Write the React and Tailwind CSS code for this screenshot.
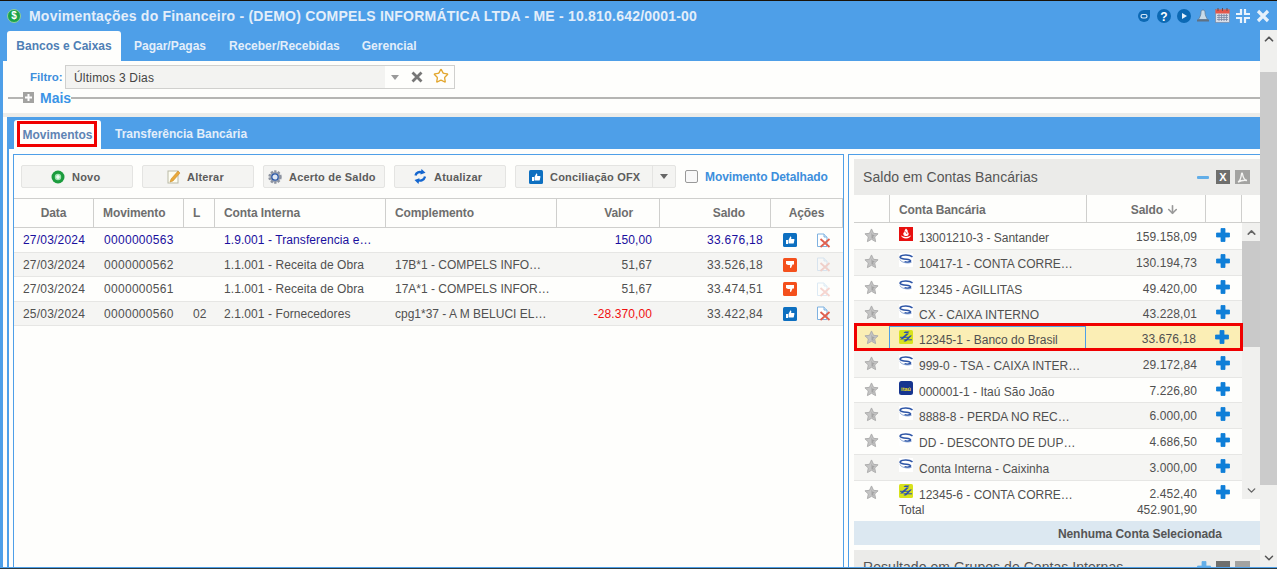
import React from "react";
import { ChevronUp, ChevronDown, Star, ArrowDown } from "lucide-react";

const movimentos = [
  { data: "27/03/2024", mov: "0000000563", l: "", conta: "1.9.001 - Transferencia e…", comp: "", valor: "150,00", saldo: "33.676,18", up: true, on: true, blue: true },
  { data: "27/03/2024", mov: "0000000562", l: "", conta: "1.1.001 - Receita de Obra", comp: "17B*1 - COMPELS INFO…", valor: "51,67", saldo: "33.526,18", up: false, on: false },
  { data: "27/03/2024", mov: "0000000561", l: "", conta: "1.1.001 - Receita de Obra", comp: "17A*1 - COMPELS INFOR…", valor: "51,67", saldo: "33.474,51", up: false, on: false },
  { data: "25/03/2024", mov: "0000000560", l: "02", conta: "2.1.001 - Fornecedores", comp: "cpg1*37 - A M BELUCI EL…", valor: "-28.370,00", saldo: "33.422,84", up: true, on: true, red: true },
];

const contas = [
  { h: "h-[27px] pt-px", bank: "san", nome: "13001210-3 - Santander", saldo: "159.158,09" },
  { h: "h-[26px]", bank: "s", nome: "10417-1 - CONTA CORRE…", saldo: "130.194,73" },
  { h: "h-[25px]", bank: "s", nome: "12345 - AGILLITAS", saldo: "49.420,00" },
  { h: "h-[25px]", bank: "s", nome: "CX - CAIXA INTERNO", saldo: "43.228,01" },
  { h: "h-[25px]", bank: "bb", nome: "12345-1 - Banco do Brasil", saldo: "33.676,18", sel: true },
  { h: "h-[27px] pt-px", bank: "s", nome: "999-0 - TSA - CAIXA INTER…", saldo: "29.172,84" },
  { h: "h-[25px]", bank: "itau", nome: "000001-1 - Itaú São João", saldo: "7.226,80" },
  { h: "h-[26px]", bank: "s", nome: "8888-8 - PERDA NO REC…", saldo: "6.000,00" },
  { h: "h-[26px]", bank: "s", nome: "DD - DESCONTO DE DUP…", saldo: "4.686,50" },
  { h: "h-[26px]", bank: "s", nome: "Conta Interna - Caixinha", saldo: "3.000,00" },
  { h: "h-[26px]", bank: "bb", nome: "12345-6 - CONTA CORRE…", saldo: "2.452,40" },
];

function BankIcon({ bank }) {
  if (bank === "san") {
    return (
      <svg width="14" height="14" viewBox="0 0 14 14" className="shrink-0">
        <rect width="14" height="14" fill="#e8100f" />
        <path d="M7 1.500C8.500 3 9.300 4 8.500 5.300 9.500 5.500 10 6.500 9.500 7.700 9 8.700 8 9 7 9S5 8.700 4.500 7.700C4 6.500 4.500 5.500 5.500 5 5.500 3.500 6 2.500 7 1.500z" fill="#fff" />
        <path d="M6.500 4.500 8 7" stroke="#e8100f" strokeWidth=".8" />
        <path d="M2 8.300c.3 2 2.200 3.200 5 3.200s4.700-1.200 5-3.200C10.800 9.500 9 10 7 10S3.200 9.500 2 8.300z" fill="#fff" />
      </svg>
    );
  }
  if (bank === "bb") {
    return (
      <svg width="14" height="14" viewBox="0 0 14 14" className="shrink-0">
        <rect width="14" height="14" rx="1.500" fill="#d8e21c" />
        <path d="M1 9.500 7.500 3.500H10L3.500 9.500zM4.500 11.500 11 5.500h2L7 11.500zM6 1.500h4.500L9 3H4.500z" fill="#2b4fb0" />
        <path d="M1 7.300h9M4.500 9.800H13" stroke="#2b4fb0" strokeWidth="1" />
      </svg>
    );
  }
  if (bank === "itau") {
    return (
      <svg width="14" height="14" viewBox="0 0 14 14" className="shrink-0">
        <rect width="14" height="14" rx="2.500" fill="#16358f" />
        <text x="7" y="10" textAnchor="middle" fontSize="5.500" fontWeight="700" fill="#f3e01c" fontFamily="Liberation Sans">itaú</text>
      </svg>
    );
  }
  return (
    <svg width="14" height="14" viewBox="0 0 14 14" className="shrink-0">
      <rect width="14" height="14" fill="#fff" />
      <path d="M13.500 3.800C10.500 1.500 3 1.500 1.300 3.600.2 5.300 4.500 6 7.500 6.300c2.500.3 4.300.8 4 1.800-.5 1.200-3.800 1.400-6 .6" fill="none" stroke="#2d55a6" strokeWidth="1.600" />
      <path d="M1 6.500c.5 2.500 7 4.500 11.500 2.800" fill="none" stroke="#7d9bd0" strokeWidth=".9" />
    </svg>
  );
}

function GrayStar() {
  return (
    <svg width="15" height="15" viewBox="0 0 24 24" className="shrink-0">
      <path d="M12 1.500l3.200 7 7.300.8-5.400 5 1.500 7.500L12 18l-6.600 3.800 1.500-7.500-5.400-5 7.300-.8z" fill="#c4c4c4" stroke="#acacac" strokeWidth="1.500" />
      <path d="M12 7l1.700 3.800 3.800.4-2.800 2.600.8 3.900L12 15.800" fill="#a4a4a4" />
    </svg>
  );
}

function PlusIcon({ light }) {
  const c = light ? "#62aee8" : "#0f7fd8";
  return (
    <svg width="14" height="14" viewBox="0 0 14 14" className="shrink-0">
      <path d="M5 .5h4v4.500h4.500v4H9v4.500H5V9H.5V5H5z" fill={c} stroke={c} strokeWidth=".8" strokeLinejoin="round" />
    </svg>
  );
}

function ThumbIcon({ up, size = 14 }) {
  return (
    <svg width={size} height={size} viewBox="0 0 14 14" className="shrink-0">
      <rect width="14" height="14" rx="1.500" fill={up ? "#0d6fc0" : "#f4501c"} />
      {up ? (
        <path d="M3 7h2v4H3zM5.500 7l1.800-3.500c.8 0 1.200.6 1 1.500l-.2 1h2.700c.5 0 .7.500.6 1l-.6 3c-.1.400-.4.600-.8.600H5.500z" fill="#fff" />
      ) : (
        <path d="M3 3h8v3.500H9.500L8 10c-.8 0-1.200-.6-1-1.500l.2-1.500H5L3 6z" fill="#fff" />
      )}
    </svg>
  );
}

function DocIcon({ on }) {
  return (
    <svg width="15" height="15" viewBox="0 0 15 15" className={on ? "shrink-0" : "shrink-0 opacity-25"}>
      <path d="M1.500 1h6.500l3 3v9.500h-9.500z" fill="#fff" stroke="#7fb2e0" />
      <path d="M8 1v3h3" fill="#d6e8f8" stroke="#7fb2e0" />
      <path d="M4.500 6l9 8M13.500 6l-9 8" stroke="#e0604f" strokeWidth="1.800" />
    </svg>
  );
}

function ToolButton({ icon, label, className }) {
  return (
    <div className={`h-[23px] flex items-center bg-[#f4f4f2] border border-[#e4e4e2] rounded-[2px] text-[11px] font-bold text-[#5c5c5c] tracking-[.2px] ${className}`}>
      {icon}
      <span className="pt-px">{label}</span>
    </div>
  );
}

function HeaderCell({ children, className }) {
  return (
    <div className={`h-full flex items-center border-r border-[#cfcfcd] text-[12px] font-bold text-[#6e6e6e] tracking-[-.1px] ${className}`}>
      {children}
    </div>
  );
}

function WinIcons() {
  return (
    <div className="flex items-center gap-[6px] pr-[7px]">
      <svg width="14" height="14" viewBox="0 0 14 14"><path d="M1 7a6 6 0 0 1 6-6h6v6a6 6 0 0 1-12 0z" fill="#0c69b4" /><rect x="4" y="5.500" width="6" height="3.500" rx="1.700" fill="none" stroke="#d7e9f8" strokeWidth="1.200" /></svg>
      <svg width="14" height="14" viewBox="0 0 14 14"><circle cx="7" cy="7" r="7" fill="#0c69b4" /><text x="7" y="11.500" textAnchor="middle" fontSize="12" fontWeight="700" fill="#fff" fontFamily="Liberation Sans">?</text></svg>
      <svg width="14" height="14" viewBox="0 0 14 14"><circle cx="7" cy="7" r="7" fill="#0c69b4" /><path d="M5 4l5 3-5 3z" fill="#e6f1fb" /></svg>
      <svg width="14" height="14" viewBox="0 0 14 14" className="-ml-px"><path d="M7 1c1.500 0 2 1 2 2.500 0 3 1.500 5 2.500 7h-9c1-2 2.500-4 2.500-7C5 2 5.500 1 7 1z" fill="#c9dbe9" stroke="#63788c" strokeWidth=".7" /><rect x="1" y="10.500" width="12" height="2" fill="#5f7183" /></svg>
      <svg width="15" height="15" viewBox="0 0 15 15" className="-ml-px"><rect x=".5" y="1.500" width="14" height="13" fill="#d7dde8" stroke="#6f7f99" strokeWidth=".6" /><rect x=".5" y="1.500" width="14" height="4" fill="#e4574a" /><path d="M3 0v3M7.500 0v3M12 0v3" stroke="#6b4a4a" /><path d="M2 7.500h11M2 9.500h11M2 11.500h11M4 6v7M6.500 6v7M9 6v7M11.500 6v7" stroke="#7b88a3" strokeWidth=".8" /></svg>
      <svg width="14" height="14" viewBox="0 0 14 14" fill="none" stroke="#eaf3fc" strokeWidth="2.200"><path d="M5 0v5H0M9 0v5h5M5 14V9H0M9 14V9h5" /></svg>
      <svg width="14" height="14" viewBox="0 0 14 14" fill="none" stroke="#e6f1fb" strokeWidth="3.200"><path d="M2 2l10 10M12 2L2 12" /></svg>
    </div>
  );
}

export default function App() {
  return (
    <div className="w-[1277px] h-[569px] overflow-hidden flex flex-col bg-[#4e9fe8] font-['Liberation_Sans',Arial,sans-serif]">
      <div className="h-px shrink-0 bg-[#1a1208]" />
      {/* title bar */}
      <div className="h-[29px] shrink-0 flex items-center justify-between pl-[7px]">
        <div className="flex items-center gap-[8px]">
          <div className="w-[14px] h-[14px] rounded-full bg-[#1aa34a] border border-[#8fd09f] flex items-center justify-center text-[10px] font-bold text-white leading-none">$</div>
          <span className="pt-px text-[14px] font-bold text-[#e3eefa] tracking-[.21px]">Movimentações do Financeiro - (DEMO) COMPELS INFORMÁTICA LTDA - ME - 10.810.642/0001-00</span>
        </div>
        <WinIcons />
      </div>

      <div className="flex flex-1 min-h-0">
        <div className="w-[1260px] flex flex-col">
          {/* top tabs */}
          <div className="h-[31px] shrink-0 flex items-end pl-[7px]">
            <div className="h-[30px] w-[114px] bg-[#fefefc] rounded-t-[3px] flex items-center justify-center text-[12px] font-bold text-[#4f7fb5]">Bancos e Caixas</div>
            <div className="ml-[2px] flex text-[12px] font-bold text-[#e3eefa] h-[30px] items-center">
              <span className="px-[11px]">Pagar/Pagas</span>
              <span className="px-[11px] ml-px">Receber/Recebidas</span>
              <span className="px-[11px]">Gerencial</span>
            </div>
          </div>

          <div className="flex-1 min-h-0 ml-[3px] bg-[#fefefc] flex flex-col">
            {/* filter */}
            <div className="h-[24px] mt-[4px] shrink-0 flex items-center pl-[27px]">
              <span className="pt-px text-[11.500px] font-bold text-[#3d8fdc] w-[35px]">Filtro:</span>
              <div className="w-[390px] h-[24px] border border-[#d0d0ce] flex items-center text-[12px] text-[#444]">
                <div className="w-[319px] h-full bg-[#f3f3f1] flex items-center pl-[8px] pt-px tracking-[.2px]">Últimos 3 Dias</div>
                <div className="flex items-center flex-1">
                  <div className="ml-[6px] w-0 h-0 border-l-[4px] border-r-[4px] border-t-[5px] border-l-transparent border-r-transparent border-t-[#999]" />
                  <svg width="12" height="12" viewBox="0 0 12 12" fill="none" stroke="#777" strokeWidth="2.800" className="ml-[12px]"><path d="M1.500 1.500l9 9M10.500 1.500l-9 9" /></svg>
                  <Star size={16} strokeWidth={2} className="ml-[10px] mb-[3px] text-[#e3a72f]" />
                </div>
              </div>
            </div>

            {/* mais */}
            <div className="h-[12px] mt-[3px] shrink-0 flex items-center ml-[5px]">
              <div className="w-[15px] h-[2px] bg-[#b5b5b3]" />
              <div className="w-[11px] h-[11px] -mt-[1px] bg-[#a3a3a1] flex items-center justify-center">
                <svg width="7" height="7" viewBox="0 0 7 7" fill="none" stroke="#fff" strokeWidth="2"><path d="M3.500 0v7M0 3.500h7" /></svg>
              </div>
              <span className="ml-[6px] -mt-[1px] text-[14px] font-bold text-[#3b94e6] leading-none">Mais</span>
              <div className="flex-1 h-[2px] bg-[#b5b5b3]" />
            </div>
            <div className="h-[9px] shrink-0" />
            <div className="h-[4px] shrink-0 bg-[#ecece9]" />

            {/* section */}
            <div className="flex-1 min-h-0 ml-[4px] border-l-2 border-[#4e9fe8] flex flex-col">
              <div className="h-[32px] shrink-0 bg-[#4e9fe8] flex items-end pl-[5px] -ml-[2px] relative">
                <div className="ml-[2px] w-[87px] h-[29px] bg-[#fefefc] rounded-t-[3px] flex items-center justify-center text-[12px] font-bold text-[#5f84b4]">Movimentos</div>
                <span className="ml-[14px] mb-[6px] text-[12px] font-bold text-[#e3eefa]">Transferência Bancária</span>
                <div className="absolute left-[10px] top-[4px] w-[80px] h-[26px] border-[3px] border-[#f00000]" />
              </div>

              <div className="flex-1 min-h-0 flex pt-[5px] pl-[4px] gap-[4px]">
                {/* left panel */}
                <div className="w-[831px] border-l border-r border-t border-[#4e9fe8] flex flex-col">
                  <div className="mt-[10px] pl-[7px] flex items-center gap-[9px] shrink-0">
                    <ToolButton className="w-[112px] pl-[29px] gap-[7px]" label="Novo" icon={
                      <svg width="14" height="14" viewBox="0 0 14 14"><circle cx="7" cy="7" r="6.500" fill="#1c9c3e" /><circle cx="7" cy="7" r="3.200" fill="#9fe6b2" /><path d="M5 7h4M7 5v4" stroke="#fff" strokeWidth="1.200" /></svg>
                    } />
                    <ToolButton className="w-[112px] pl-[24px] gap-[6px]" label="Alterar" icon={
                      <svg width="14" height="15" viewBox="0 0 14 15"><rect x="1" y="2" width="10" height="12" fill="#fdfdf2" stroke="#b9b9a6" /><path d="M4 10l7-8 2 2-7 8-3 1z" fill="#e9a93a" stroke="#c58520" strokeWidth=".5" /></svg>
                    } />
                    <ToolButton className="w-[122px] pl-[3px] gap-[6px]" label="Acerto de Saldo" icon={
                      <svg width="16" height="16" viewBox="0 0 16 16"><circle cx="8" cy="8" r="5.500" fill="#a5abb8" stroke="#8d93a0" strokeWidth="2.500" strokeDasharray="2.200 1.300" /><circle cx="8" cy="8" r="3.200" fill="#dfe7f3" stroke="#2d5aa8" strokeWidth="1.300" /></svg>
                    } />
                    <ToolButton className="w-[112px] pl-[19px] gap-[8px]" label="Atualizar" icon={
                      <svg width="12" height="15" viewBox="0 0 12 15" fill="none" stroke="#1466cf" strokeWidth="2.300"><path d="M1.500 6.500C2 3.500 5.500 2 8.500 3.800" /><path d="M11 7.500C10.500 11 6.500 12.500 3.500 10.800" /><path d="M7.500 0l4 3.800-5 1.800z" fill="#1466cf" stroke="none" /><path d="M4.500 15L.5 11l5-1.800z" fill="#1466cf" stroke="none" /></svg>
                    } />
                    <div className="w-[161px] h-[23px] flex bg-[#f4f4f2] border border-[#e4e4e2] rounded-[2px] text-[11px] font-bold text-[#5c5c5c] tracking-[.2px]">
                      <div className="w-[137px] flex items-center pl-[13px] gap-[7px] border-r border-[#e4e4e2]">
                        <ThumbIcon up />
                        <span className="pt-px">Conciliação OFX</span>
                      </div>
                      <div className="flex-1 flex items-center justify-center">
                        <div className="w-0 h-0 border-l-[4px] border-r-[4px] border-t-[5px] border-l-transparent border-r-transparent border-t-[#666]" />
                      </div>
                    </div>
                    <div className="w-[13px] h-[13px] border border-[#999] rounded-[2px] bg-[#f8f8f8]" />
                    <span className="-ml-[2px] text-[12px] font-bold text-[#3d8fdc] tracking-[-.1px]">Movimento Detalhado</span>
                  </div>

                  {/* table header */}
                  <div className="mt-[10px] h-[30px] shrink-0 flex border-t border-b border-[#cfcfcd]">
                    <HeaderCell className="w-[80px] justify-center">Data</HeaderCell>
                    <HeaderCell className="w-[90px] pl-[9px]">Movimento</HeaderCell>
                    <HeaderCell className="w-[31px] pl-[9px]">L</HeaderCell>
                    <HeaderCell className="w-[171px] pl-[9px]">Conta Interna</HeaderCell>
                    <HeaderCell className="w-[171px] pl-[9px]">Complemento</HeaderCell>
                    <HeaderCell className="w-[103px] justify-end pr-[26px]">Valor</HeaderCell>
                    <HeaderCell className="w-[111px] justify-end pr-[25px]">Saldo</HeaderCell>
                    <HeaderCell className="flex-1 justify-center">Ações</HeaderCell>
                  </div>

                  {movimentos.map((m, i) => (
                    <div
                      key={m.mov}
                      className={`h-[24.500px] shrink-0 flex items-center border-b border-[#e6e6e4] text-[12px] pt-px ${i % 2 ? "bg-[#f5f5f3]" : "bg-[#fefefc]"} ${m.blue ? "text-[#1a0f9e]" : "text-[#505050]"}`}
                    >
                      <div className="w-[80px] pl-[9px] tracking-[.2px]">{m.data}</div>
                      <div className="w-[90px] pl-[10px] tracking-[.3px]">{m.mov}</div>
                      <div className="w-[31px] pl-[9px]">{m.l}</div>
                      <div className="w-[171px] pl-[9px] whitespace-nowrap tracking-[.08px]">{m.conta}</div>
                      <div className="w-[171px] pl-[9px] whitespace-nowrap">{m.comp}</div>
                      <div className={`w-[103px] pr-[8px] text-right tracking-[.1px] ${m.red ? "text-[#f01010]" : ""}`}>{m.valor}</div>
                      <div className="w-[111px] pr-[8px] text-right tracking-[.3px]">{m.saldo}</div>
                      <div className="flex-1 flex items-center pl-[12px] gap-[19px]">
                        <ThumbIcon up={m.up} />
                        <DocIcon on={m.on} />
                      </div>
                    </div>
                  ))}
                </div>

                {/* right panel */}
                <div className="flex-1 min-w-0 border-l border-t border-[#4e9fe8] pl-[5px] pt-[4px] flex flex-col">
                  <div className="h-[36px] shrink-0 bg-[#ebebe9] flex items-center justify-between pl-[9px] pr-[10px]">
                    <span className="pt-px text-[14px] text-[#555] tracking-[.05px]">Saldo em Contas Bancárias</span>
                    <div className="flex items-center">
                      <div className="w-[12px] h-[3px] bg-[#62aee8] rounded-[1px]" />
                      <div className="ml-[7px] w-[14px] h-[14px] bg-[#6f6f6d] flex items-center justify-center text-[11px] font-bold text-white">X</div>
                      <div className="ml-[5px] w-[15px] h-[14px] bg-[#a3a3a1] flex items-center justify-center">
                        <svg width="11" height="11" viewBox="0 0 11 11" fill="none" stroke="#f4f4f2" strokeWidth="1.400"><path d="M1 10c2-1 3-4 3.500-8 0-1 1-1 1 0 .5 3 2 6 4.500 6.500-3-.5-6 0-9 1.500z" /></svg>
                      </div>
                    </div>
                  </div>

                  <div className="h-[28px] shrink-0 flex border-b border-[#cfcfcd]">
                    <HeaderCell className="w-[36px]" />
                    <HeaderCell className="w-[197px] pl-[9px] pt-[2px]">Conta Bancária</HeaderCell>
                    <HeaderCell className="w-[119px] justify-end pr-[42px] pt-[2px] relative">
                      Saldo
                      <ArrowDown size={13} strokeWidth={3} className="absolute right-[26px] text-[#999]" />
                    </HeaderCell>
                    <HeaderCell className="w-[36px]" />
                  </div>

                  <div className="h-[276px] shrink-0 flex overflow-hidden relative">
                    <div className="w-[388px] overflow-hidden">
                      {contas.map((c, i) => (
                        <div
                          key={c.nome}
                          className={`${c.h} flex items-start border-b border-[#e6e6e4] text-[12px] text-[#505050] ${c.sel ? "bg-[#fbeeb5]" : i % 2 ? "bg-[#f5f5f3]" : "bg-[#fefefc]"}`}
                        >
                          <div className="w-[36px] pl-[10px] pt-[4px]"><GrayStar /></div>
                          <div className={`w-[197px] h-full flex items-start pl-[9px] gap-[6px] whitespace-nowrap ${c.sel ? "border border-[#4e9fe8] -ml-px" : ""}`}>
                            <div className="pt-[3px]"><BankIcon bank={c.bank} /></div>
                            <span className={`${c.sel ? "pt-[6px]" : "pt-[7px]"} leading-[14px]`}>{c.nome}</span>
                          </div>
                          <div className="w-[119px] pr-[9px] pt-[4px] text-right tracking-[.1px]">{c.saldo}</div>
                          <div className="pl-[10px] pt-[4px]"><PlusIcon /></div>
                        </div>
                      ))}
                    </div>
                    <div className="flex-1 flex flex-col bg-[#f0f0ee] text-[#666]">
                      <div className="h-[18px] flex items-center justify-center"><ChevronUp size={13} strokeWidth={3} /></div>
                      <div className="h-[106px] bg-[#c9c9c9]" />
                      <div className="flex-1" />
                      <div className="h-[18px] flex items-center justify-center"><ChevronDown size={13} strokeWidth={2.500} /></div>
                    </div>
                    <div className="absolute left-0 top-[100px] w-[389px] h-[28px] border-[3px] border-[#f00000]" />
                  </div>

                  <div className="h-[22px] shrink-0 flex items-center text-[12px] text-[#505050] w-[388px]">
                    <span className="pl-[45px]">Total</span>
                    <span className="ml-auto pr-[45px]">452.901,90</span>
                  </div>
                  <div className="h-[24px] shrink-0 bg-[#dce8f1] flex items-center justify-end pr-[38px] pt-px text-[12px] font-bold text-[#555] tracking-[-.05px]">Nenhuma Conta Selecionada</div>
                  <div className="mt-[5px] h-[36px] shrink-0 bg-[#ebebe9] flex justify-between pl-[9px] pr-[10px] pt-[9px]">
                    <span className="text-[14px] text-[#555] leading-[16px] tracking-[.05px]">Resultado em Grupos de Contas Internas</span>
                    <div className="flex items-start mt-[2px]">
                      <PlusIcon light />
                      <div className="ml-[5px] w-[14px] h-[14px] bg-[#6f6f6d]" />
                      <div className="ml-[5px] w-[15px] h-[14px] bg-[#a3a3a1]" />
                    </div>
                  </div>
                </div>
              </div>
            </div>
          </div>
        </div>

        {/* page scrollbar */}
        <div className="w-[17px] flex flex-col bg-[#f0f0ee] text-[#555]">
          <div className="h-[42px] flex justify-center pt-[2px]"><ChevronUp size={14} strokeWidth={3} /></div>
          <div className="h-[413px] bg-[#cbcbcb]" />
          <div className="flex-1 flex items-end justify-center pb-[2px]"><ChevronDown size={14} strokeWidth={2.500} /></div>
        </div>
      </div>

      <div className="h-px shrink-0 bg-[#4e9fe8]" />
      <div className="h-px shrink-0 bg-[#2c3a3f]" />
    </div>
  );
}
